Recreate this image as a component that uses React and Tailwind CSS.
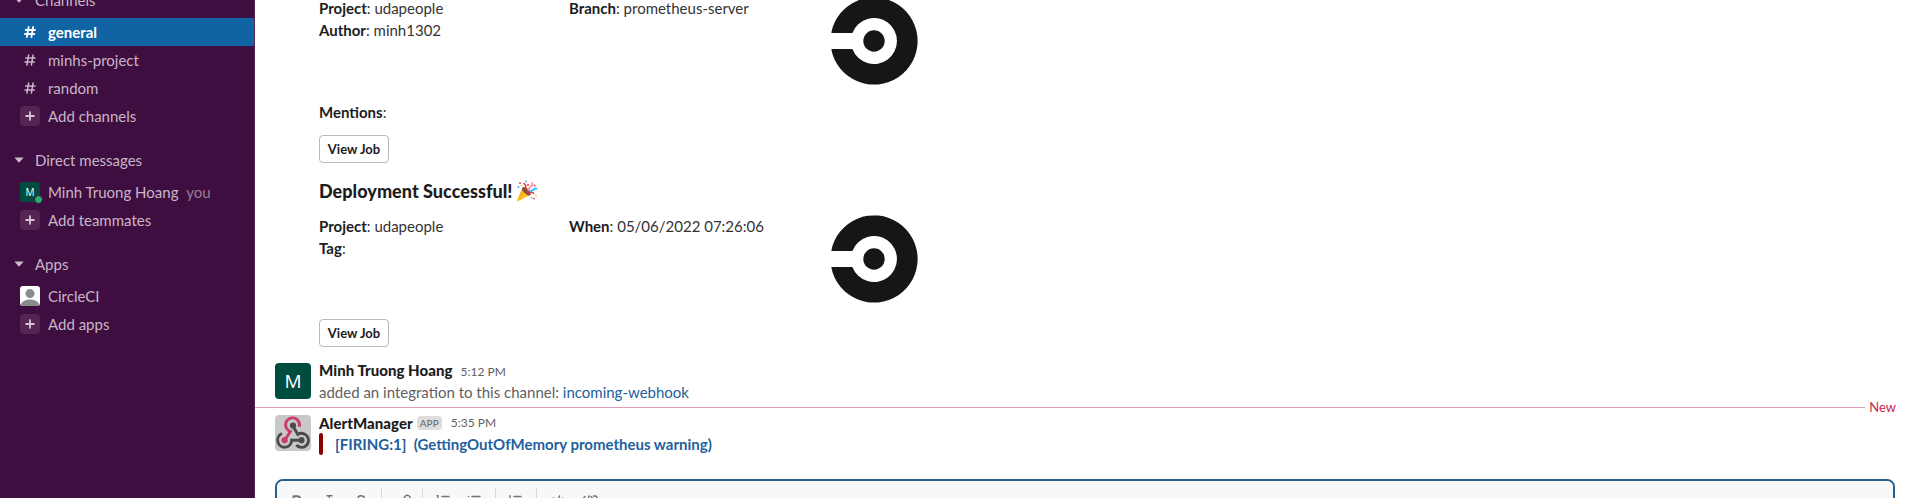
import React from "react";

function Caret() {
  return (
    <svg width="10" height="6" viewBox="0 0 10 6" className="ml-3.5 shrink-0">
      <path d="M1 0.4h8q0.6 0 0.2 0.6L5.5 5.3q-0.5 0.5-1 0L0.8 1Q0.4 0.4 1 0.4z" fill="#cdb9cb" />
    </svg>
  );
}

function SectionHeader({ label }) {
  return (
    <div className="flex h-7 items-center gap-[11px]">
      <Caret />
      <span>{label}</span>
    </div>
  );
}

function SidebarRow({ icon, children, active }) {
  return (
    <div
      className={
        active
          ? "flex h-7 items-center gap-2 bg-[#1164a3] pl-5 font-bold text-white"
          : "flex h-7 items-center gap-2 pl-5"
      }
    >
      <span className="flex h-5 w-5 shrink-0 items-center justify-center">{icon}</span>
      <span>{children}</span>
    </div>
  );
}

function Hash({ bold }) {
  return (
    <svg width="12" height="12" viewBox="0 0 12 12" fill="none" stroke="currentColor" strokeWidth={bold ? 1.8 : 1.5} strokeLinecap="round">
      <path d="M4.6 1L2.9 11M9.1 1L7.4 11M1.7 4h9.3M1 8h9.3" />
    </svg>
  );
}

function Plus() {
  return (
    <span className="flex h-5 w-5 items-center justify-center rounded bg-[#542651]">
      <svg width="10" height="10" viewBox="0 0 10 10" stroke="#d5c5d4" strokeWidth="1.8" strokeLinecap="round">
        <path d="M5 1.2v7.6M1.2 5h7.6" />
      </svg>
    </span>
  );
}

function Person() {
  return (
    <svg width="20" height="20" viewBox="0 0 20 20" className="rounded-[3px]">
      <rect width="20" height="20" fill="#fff" />
      <circle cx="10" cy="7.6" r="4.5" fill="#8b8b8b" />
      <path d="M1 20v-2.2C3 14.8 6 13.6 10 13.6s7 1.2 9 4.2V20z" fill="#8b8b8b" />
    </svg>
  );
}

function Sidebar() {
  return (
    <aside className="flex h-full w-[255px] shrink-0 flex-col border-r border-[#522653] bg-[#3f0e40] text-[15px] text-[#c9b5c8]">
      <div className="-mt-[14px] mb-1">
        <SectionHeader label="Channels" />
      </div>
      <SidebarRow active icon={<Hash bold />}>general</SidebarRow>
      <SidebarRow icon={<Hash />}>minhs-project</SidebarRow>
      <SidebarRow icon={<Hash />}>random</SidebarRow>
      <SidebarRow icon={<Plus />}>Add channels</SidebarRow>
      <div className="mb-1 mt-4">
        <SectionHeader label="Direct messages" />
      </div>
      <SidebarRow
        icon={
          <span className="relative flex h-5 w-5 items-center justify-center rounded-[3px] bg-[#004d40] font-['Open_Sans',sans-serif] text-[10px] text-white">
            M
            <span className="absolute -bottom-[2px] -right-[3px] h-[9px] w-[9px] rounded-full border border-[#3f0e40] bg-[#2bac76]" />
          </span>
        }
      >
        Minh Truong Hoang <span className="ml-1 text-[#987c98]">you</span>
      </SidebarRow>
      <SidebarRow icon={<Plus />}>Add teammates</SidebarRow>
      <div className="mb-1 mt-4">
        <SectionHeader label="Apps" />
      </div>
      <SidebarRow icon={<Person />}>CircleCI</SidebarRow>
      <SidebarRow icon={<Plus />}>Add apps</SidebarRow>
    </aside>
  );
}

function CircleLogo() {
  return (
    <svg width="88" height="88" viewBox="0 0 88 88" className="shrink-0">
      <path
        d="M1.3 35.4A43.6 43.6 0 1 1 1.3 52.6Q1.1 52 2 52H22.4A23 23 0 1 0 22.4 36H2Q1.1 36 1.3 35.4z"
        fill="#161616"
      />
      <circle cx="44" cy="44" r="10.7" fill="#161616" />
    </svg>
  );
}

function Field({ name, value }) {
  return (
    <div className="text-[#343334]">
      <b className="font-bold text-[#1d1c1d]">{name}</b>: {value}
    </div>
  );
}

function JobFields({ left, right }) {
  return (
    <div className="flex h-[88px]">
      <div className="w-[250px]">
        {left.map(([n, v]) => (
          <Field key={n} name={n} value={v} />
        ))}
      </div>
      <div className="w-[261px]">
        <Field name={right[0]} value={right[1]} />
      </div>
      <CircleLogo />
    </div>
  );
}

function JobButton() {
  return (
    <button className="flex h-7 w-[70px] items-center justify-center rounded border border-[#bbbabb] bg-white text-[13px] font-bold text-[#1d1c1d]">
      View Job
    </button>
  );
}

function Popper() {
  return (
    <svg width="22" height="22" viewBox="0 0 22 22">
      <path d="M1 20.6L6.5 7.5l7.8 7.6L2 21.2q-1 .2-1-.6z" fill="#fcc21b" />
      <path d="M3.2 16l3.3-8.5 2.8 2.7L4.6 19.8z" fill="#f79329" opacity=".4" />
      <path d="M6.3 8c1-2 4-.6 6.1 1.6s3.2 4.7 1.8 5.600-4-.5-5.800-2.500S5.400 9.600 6.300 8z" fill="#8d4a3c" />
      <path d="M9 8.500c2-1.600.2-4-1.400-5.300M12.500 13c2-1 4.400-1.400 5.400.8" stroke="#e8343f" strokeWidth="1.600" fill="none" />
      <path d="M11.500 10.500c2.500-.8 1.300-3.500 3.300-4.200s2-2.700.8-3.800" stroke="#f48fb1" strokeWidth="1.700" fill="none" />
      <path d="M14 12c.6-2.500 3-1 4-2.500s1.700-1.500 3-.5" stroke="#29b6f6" strokeWidth="1.800" fill="none" />
      <g fill="#ed4c5c">
        <circle cx="4" cy="3" r="1" />
        <circle cx="18.600" cy="5.500" r="1" />
        <circle cx="12" cy="4.800" r="1.100" />
        <circle cx="18" cy="18.500" r="1" />
      </g>
      <g fill="#42a5f5">
        <circle cx="2.500" cy="7" r=".9" />
        <circle cx="10" cy="1.500" r=".9" />
        <circle cx="15.500" cy="18" r=".8" />
      </g>
      <g fill="#fcc21b">
        <circle cx="5.700" cy="5.500" r=".9" />
        <circle cx="20" cy="15.500" r=".9" />
      </g>
    </svg>
  );
}

function WebhookAvatar() {
  return (
    <svg width="36" height="36" viewBox="0 0 36 36" className="shrink-0 rounded">
      <rect width="36" height="36" fill="#c8c8c8" />
      <g fill="none" strokeWidth="2.900">
        <path d="M9.800 25L15.400 16.600A7 7 0 1 1 24.300 11.800" stroke="#ca3a6c" />
        <path d="M17.800 10.800L22.800 19.400A7 7 0 1 1 21.300 30" stroke="#4b4b4b" />
        <path d="M26.500 25.200H16.600A7 7 0 1 1 7 18.700" stroke="#4b4b4b" />
      </g>
      <circle cx="18" cy="10.600" r="3.100" fill="#4b4b4b" />
      <circle cx="9.600" cy="25.200" r="3.100" fill="#ca3a6c" />
      <circle cx="26.500" cy="25.200" r="3.100" fill="#4b4b4b" />
    </svg>
  );
}

function Separator() {
  return <span className="-mt-0.5 h-5 w-px bg-[#d9d9d9]" />;
}

function Tool({ children }) {
  return (
    <svg width="18" height="18" viewBox="0 0 18 18" fill="none" stroke="#747374" strokeWidth="1.400" strokeLinecap="round" strokeLinejoin="round">
      {children}
    </svg>
  );
}

function Composer() {
  return (
    <div className="h-[120px] w-[1620px] shrink-0 overflow-hidden rounded-lg border-2 border-[#23608f] bg-white">
      <div className="flex h-10 items-start bg-[#f8f8f8] pl-[11px] pt-[9px]">
        <div className="flex w-[82px] justify-between">
          <Tool>
            <path d="M5.500 6.200h4a2.500 2.500 0 0 1 0 5h-4zM5.500 11.200h4.800a2.700 2.700 0 0 1 0 5.400H5.500z" strokeWidth="2" />
          </Tool>
          <Tool>
            <path d="M7 5.700h5M9.500 5.700L8 16M5.500 16h5" />
          </Tool>
          <Tool>
            <path d="M12.500 8C11.500 5 6 5 6 8.200c0 3 7 2 7 5s-6 3.300-7 .3M3 10.700h12" />
          </Tool>
        </div>
        <span className="ml-[11px] flex"><Separator /></span>
        <span className="ml-[14px]">
          <Tool>
            <path d="M7.500 12l3.500-3.500M8 8l1.200-1.700a2.700 2.700 0 0 1 4.200 3.700l-1.200 1.500M10 12.500l-1.500 1.500a3 3 0 0 1-4.200-4.200l1-1" />
          </Tool>
        </span>
        <span className="ml-[8px] flex"><Separator /></span>
        <span className="ml-[11px]">
          <Tool>
            <path d="M3 5.800h1v3M8 6.500h7M8 11h7M3 11h2M8 15.500h7" />
          </Tool>
        </span>
        <span className="ml-[13px]">
          <Tool>
            <path d="M3.500 6.500h.2M7 6.500h8M3.500 11h.2M7 11h8M3.500 15.500h.2M7 15.500h8" />
          </Tool>
        </span>
        <span className="ml-[12px] flex"><Separator /></span>
        <span className="ml-[10px]">
          <Tool>
            <path d="M4 5.800v10M8 6.500h7M8 11h6M8 15.500h7" />
          </Tool>
        </span>
        <span className="ml-[12px] flex"><Separator /></span>
        <span className="ml-[12px]">
          <Tool>
            <path d="M10.500 6l-3 10M4.500 8L1.500 11.300l3 3.200M13.500 8l3 3.300-3 3.200" />
          </Tool>
        </span>
        <span className="ml-[13px]">
          <Tool>
            <path d="M5 6.500L2.500 9.200 5 12M9 6L7 12.500M11 6.500l2.500 2.700L11 12M13.500 6H15q2 0 2 2v6q0 2-2 2H6" />
          </Tool>
        </span>
      </div>
    </div>
  );
}

export default function App() {
  return (
    <div className="flex h-[498px] w-[1915px] overflow-hidden bg-white font-['Lato','Noto_Sans',sans-serif]">
      <Sidebar />
      <main className="flex h-full min-w-0 flex-1 flex-col text-[15px] leading-[22px] text-[#1d1c1d]">
        <div className="-mt-[3px] flex h-[366px] shrink-0 flex-col items-start pl-16">
          <JobFields left={[["Project", "udapeople"], ["Author", "minh1302"]]} right={["Branch", "prometheus-server"]} />
          <div className="mt-4">
            <Field name="Mentions" value="" />
          </div>
          <div className="mt-3"><JobButton /></div>
          <div className="mt-4 flex h-6 items-center gap-1 text-[18px] font-black tracking-[0.03px]">
            Deployment Successful!
            <Popper />
          </div>
          <div className="mt-[12px]">
            <JobFields left={[["Project", "udapeople"], ["Tag", ""]]} right={["When", "05/06/2022 07:26:06"]} />
          </div>
          <div className="mt-4"><JobButton /></div>
        </div>
        <section className="flex h-[38px] shrink-0 gap-2 pl-5">
          <div className="flex h-9 w-9 items-center justify-center rounded bg-[#004d40] font-['Open_Sans',sans-serif] text-[19px] text-white">M</div>
          <div className="-mt-1">
            <div className="flex h-[22px] items-baseline gap-2">
              <b className="font-black tracking-[0.04px]">Minh Truong Hoang</b>
              <span className="text-xs leading-[22px] text-[#616061]">5:12 PM</span>
            </div>
            <div className="text-[#616061]">
              added an integration to this channel: <span className="text-[#23609c]">incoming-webhook</span>
            </div>
          </div>
        </section>
        <div className="flex h-3 shrink-0 items-center gap-1 pr-[19px]">
          <span className="h-px flex-1 bg-[#dfa0b5]" />
          <span className="text-[13px] leading-3 text-[#cd2553]">New</span>
        </div>
        <section className="flex h-[66px] shrink-0 gap-2 pl-5 pt-0.5">
          <WebhookAvatar />
          <div className="-mt-1">
            <div className="flex items-center">
              <b className="font-black tracking-[0.04px]">AlertManager</b>
              <span className="ml-1 flex h-[14px] items-center rounded-sm bg-[#dddddd] px-[3px] text-[10px] leading-none tracking-[0.1px] text-[#616061]">APP</span>
              <span className="ml-[9px] mt-px text-xs leading-[22px] text-[#616061]">5:35 PM</span>
            </div>
            <div className="-mt-px flex gap-3 font-bold text-[#23609c]">
              <span className="h-[22px] w-1 rounded bg-[#8b0000]" />
              <span className="whitespace-pre">[FIRING:1]  (GettingOutOfMemory prometheus warning)</span>
            </div>
          </div>
        </section>
        <div className="pl-5"><Composer /></div>
      </main>
    </div>
  );
}
